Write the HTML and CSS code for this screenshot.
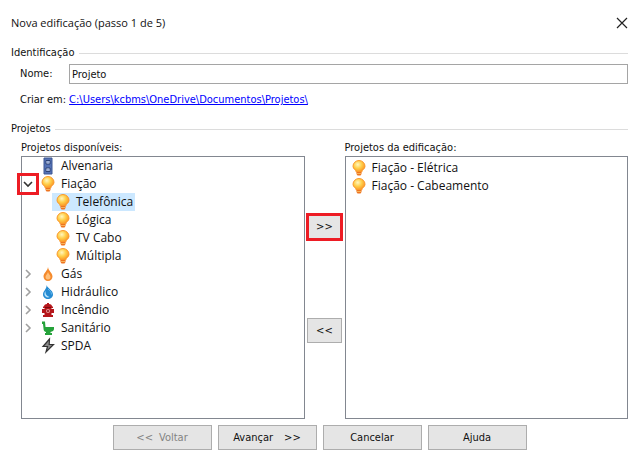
FILE: index.html
```html
<!DOCTYPE html>
<html lang="pt-BR">
<head>
    <meta charset="UTF-8">
    <meta name="viewport" content="width=device-width, initial-scale=1.0">
    <title>Nova edificação</title>
    <link rel="stylesheet" href="styles.css">
</head>
<body>

    <!-- Icon shared by every wiring project -->
    <svg class="sprite" aria-hidden="true">
        <defs>
            <radialGradient id="glow" cx="0.4" cy="0.35" r="0.65">
                <stop offset="0" stop-color="#fff6c0"/>
                <stop offset="0.5" stop-color="#ffd04a"/>
                <stop offset="1" stop-color="#fb9526"/>
            </radialGradient>
        </defs>
        <symbol id="bulb" viewBox="0 0 16 18">
            <path d="M8 1.500A6 5.800 0 0 0 2 7.300c0 2.700 3 3.500 3.300 5.700h5.400c.3-2.200 3.300-3 3.300-5.700A6 5.800 0 0 0 8 1.500z" fill="url(#glow)" stroke="#fb9a2c"/>
            <path d="M5.500 13h5v2l-1 1.500h-3l-1-1.500z" fill="#ee7420"/>
            <path d="M6 14.500h4" stroke="#f7b45a"/>
        </symbol>
        <symbol id="chevron" viewBox="0 0 10 10">
            <path d="M3 1l4 4-4 4" fill="none" stroke="currentColor" stroke-width="1.600"/>
        </symbol>
    </svg>

    <form class="dialog">
        <header class="titlebar">
            <h1>Nova edificação (passo 1 de 5)</h1>
            <button type="button" class="close" aria-label="Fechar">
                <svg width="12" height="12" viewBox="0 0 12 12"><path d="M1 1l10 10M11 1L1 11" stroke="#222" stroke-width="1.2"/></svg>
            </button>
        </header>

        <section>
            <h2>Identificação</h2>
            <div class="fields">
                <label for="nome">Nome:</label>
                <input type="text" id="nome" value="Projeto">
            </div>
            <div class="path">
                <span>Criar em:</span>
                <a href="#">C:\Users\kcbms\OneDrive\Documentos\Projetos\</a>
            </div>
        </section>

        <section class="projects">
            <h2>Projetos</h2>
            <div class="picker">
                <div class="column">
                    <h3>Projetos disponíveis:</h3>
                    <ul class="list">
                        <li class="row">
                            <span class="toggle"></span>
                            <svg class="icon" viewBox="0 0 16 18"><path d="M4 1h8v16H4z" fill="#5572b5" stroke="#3d5792"/><path d="M6 3.500h4v3.500H6zM6 11h4v3.500H6z" fill="#dfe8fa" stroke="#2c4274"/><path d="M7 5h2M7 13h2" stroke="#5572b5"/></svg>
                            <span class="name">Alvenaria</span>
                        </li>
                        <li>
                            <div class="row">
                                <button type="button" class="toggle open marked" aria-label="Recolher Fiação" aria-expanded="true"><svg width="10" height="10"><use href="#chevron"/></svg></button>
                                <svg class="icon"><use href="#bulb"/></svg>
                                <span class="name">Fiação</span>
                            </div>
                            <ul class="children">
                                <li class="row selected"><svg class="icon"><use href="#bulb"/></svg><span class="name">Telefônica</span></li>
                                <li class="row"><svg class="icon"><use href="#bulb"/></svg><span class="name">Lógica</span></li>
                                <li class="row"><svg class="icon"><use href="#bulb"/></svg><span class="name">TV Cabo</span></li>
                                <li class="row"><svg class="icon"><use href="#bulb"/></svg><span class="name">Múltipla</span></li>
                            </ul>
                        </li>
                        <li class="row">
                            <button type="button" class="toggle" aria-label="Expandir Gás"><svg width="10" height="10"><use href="#chevron"/></svg></button>
                            <svg class="icon" viewBox="0 0 16 18"><path d="M8 2c.5 4 4.500 6 4.500 9.500 0 2.500-2 4.500-4.500 4.500s-4.500-2-4.500-4.500C3.500 8 7.500 6 8 2z" fill="#f58a2c"/><path d="M8 7c.3 2 2.500 3 2.500 5 0 1.500-1 2.500-2.500 2.500S5.500 13.500 5.500 12c0-2 2.200-3 2.500-5z" fill="#ffc07a"/></svg>
                            <span class="name">Gás</span>
                        </li>
                        <li class="row">
                            <button type="button" class="toggle" aria-label="Expandir Hidráulico"><svg width="10" height="10"><use href="#chevron"/></svg></button>
                            <svg class="icon" viewBox="0 0 16 18"><path d="M6.500 2c1 3.500 6.500 5 6.500 9.500 0 2.500-2.200 4.500-5 4.500s-5-2-5-4.500C3 8 7 6 6.500 2z" fill="#258bd2"/><path d="M5.500 8c-1.500 2-1.500 4 0 5.500 1 1 3 1.200 4 .5-3-1-4.300-3-4-6z" fill="#b5e1fb"/><path d="M8 6c2 2 3.500 3 3.500 5.500" fill="none" stroke="#65b9ee"/></svg>
                            <span class="name">Hidráulico</span>
                        </li>
                        <li class="row">
                            <button type="button" class="toggle" aria-label="Expandir Incêndio"><svg width="10" height="10"><use href="#chevron"/></svg></button>
                            <svg class="icon" viewBox="0 0 16 18"><path d="M7 2h2v1c2 .3 3 1 3 2.500h1V7h-1.500v1H14v4h-2.500v2H13v2H3v-2h1.500v-2H2V8h2.500V7H3V5.500h1C4 4 5 3.300 7 3z" fill="#b5161b"/><circle cx="8" cy="10" r="2" fill="#e99a98"/><circle cx="8" cy="10" r="1" fill="#8b0d12"/><path d="M5 6.500h6" stroke="#7d0b10"/></svg>
                            <span class="name">Incêndio</span>
                        </li>
                        <li class="row">
                            <button type="button" class="toggle" aria-label="Expandir Sanitário"><svg width="10" height="10"><use href="#chevron"/></svg></button>
                            <svg class="icon" viewBox="0 0 16 18"><path d="M2 2.500h3L5.500 8H14v2c0 1.500-1.500 2.500-3.500 3v1H12v2H5v-2h1v-1C4 12.500 3.500 11 3.500 9.500L3 5H2z" fill="#25a23a"/></svg>
                            <span class="name">Sanitário</span>
                        </li>
                        <li class="row">
                            <span class="toggle"></span>
                            <svg class="icon" viewBox="0 0 16 18"><path d="M9.500 2L3 9.500h4.500L6 15l7.500-7.500H9.200z" fill="#8a8a8a" stroke="#333" stroke-width="1.200"/></svg>
                            <span class="name">SPDA</span>
                        </li>
                    </ul>
                </div>

                <div class="transfer">
                    <button type="button" class="arrows marked">&gt;&gt;</button>
                    <button type="button" class="arrows">&lt;&lt;</button>
                </div>

                <div class="column">
                    <h3>Projetos da edificação:</h3>
                    <ul class="list chosen">
                        <li class="row"><svg class="icon"><use href="#bulb"/></svg><span class="name">Fiação - Elétrica</span></li>
                        <li class="row"><svg class="icon"><use href="#bulb"/></svg><span class="name">Fiação - Cabeamento</span></li>
                    </ul>
                </div>
            </div>
        </section>

        <footer class="actions">
            <button type="button" disabled><span class="arrows">&lt;&lt;</span><span>Voltar</span></button>
            <button type="button" class="next"><span>Avançar</span><span class="arrows">&gt;&gt;</span></button>
            <button type="button">Cancelar</button>
            <button type="button">Ajuda</button>
        </footer>
    </form>

</body>
</html>
```

FILE: styles.css
```css
* {
    box-sizing: border-box;
}
body {
    margin: 0;
    background-color: #fff;
    color: #111;
    font-family: "DejaVu Sans Condensed", "DejaVu Sans", sans-serif;
    font-size: 11px;
    line-height: 16px;
}
h1, h2, h3, ul {
    margin: 0;
    padding: 0;
    font-weight: normal;
}
ul {
    list-style: none;
}
button, input {
    font: inherit;
    color: inherit;
}
.sprite {
    position: absolute;
    width: 0;
    height: 0;
}
.dialog {
    display: flex;
    flex-direction: column;
    min-height: 100vh;
    padding: 12px 7px 11px 11px;
}
.titlebar {
    display: flex;
    justify-content: space-between;
    align-items: center;
    height: 22px;
    margin-bottom: 11px;
}
h1 {
    font-size: 11px;
}
.close {
    display: flex;
    padding: 0;
    border: none;
    background: none;
}
h2 {
    display: flex;
    align-items: center;
    gap: 4px;
    font-size: 11px;
}
h2::after {
    content: "";
    flex: 1;
    height: 1px;
    background-color: #dcdcdc;
}
.fields {
    display: grid;
    grid-template-columns: 49px 1fr;
    align-items: center;
    padding-left: 9px;
    margin-top: 3px;
}
.fields input {
    width: 100%;
    height: 20px;
    padding: 0 2px;
    border: 1px solid #a5a5a5;
}
.path {
    display: flex;
    gap: 3px;
    padding-left: 9px;
    margin-top: 8px;
}
.path a {
    color: #0000ff;
}
.projects {
    display: flex;
    flex-direction: column;
    flex: 1;
    margin-top: 13px;
}
.picker {
    display: flex;
    flex: 1;
    padding-left: 10px;
    margin-top: 2px;
}
.column {
    display: flex;
    flex-direction: column;
    flex: 1;
}
h3 {
    font-size: 11px;
    line-height: 17px;
}
h1, .list {
    font-family: "Open Sans", "Noto Sans", sans-serif;
}
.list {
    flex: 1;
    border: 1px solid #828790;
    font-size: 12px;
}
.row {
    display: flex;
    align-items: center;
    height: 18px;
}
.toggle {
    display: flex;
    justify-content: center;
    align-items: center;
    width: 12px;
    height: 18px;
    margin-right: 6px;
    padding: 0;
    border: none;
    background: none;
    color: #a0a0a0;
}
.toggle.open svg {
    transform: rotate(90deg);
}
.toggle.marked {
    width: 22px;
    height: 22px;
    margin: 0 1px 0 -5px;
    border: 3px solid #ed1c24;
    color: #333;
}
.icon {
    width: 16px;
    height: 18px;
    flex: none;
}
.name {
    margin-left: 3px;
    padding: 0 2px;
    line-height: 18px;
}
.children {
    padding-left: 30px;
}
.children .row {
    width: fit-content;
    padding-left: 3px;
}
.selected {
    background-color: #cce8ff;
}
.chosen {
    padding: 2px 5px;
}
.transfer {
    display: flex;
    flex-direction: column;
    align-items: center;
    gap: 77px;
    width: 40px;
    padding-top: 74px;
}
.transfer button, .actions button {
    height: 25px;
    padding: 0;
    border: 1px solid #adadad;
    background-color: #e5e5e5;
}
.transfer button {
    width: 35px;
}
.transfer .marked {
    width: 37px;
    height: 28px;
    border: 3px solid #ed1c24;
}
.arrows {
    font-family: "DejaVu Sans", sans-serif;
    font-size: 10px;
}
.actions {
    display: flex;
    justify-content: center;
    gap: 6px;
    margin-top: 6px;
}
.actions button {
    display: flex;
    justify-content: center;
    align-items: center;
    gap: 6px;
    width: 99px;
}
.actions button:disabled {
    color: #838383;
}
.actions .next {
    gap: 11px;
}
```
